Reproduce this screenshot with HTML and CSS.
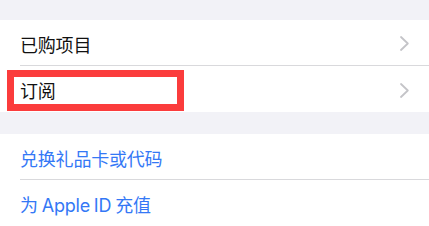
FILE: index.html
```html
<!DOCTYPE html>
<html lang="zh-CN">

<head>
    <meta charset="UTF-8">
    <meta name="viewport" content="width=device-width, initial-scale=1.0">
    <title>账户</title>
    <link rel="stylesheet" href="styles.css">
</head>

<body>

    <div class="gap top"></div>

    <div class="group">
        <div class="row">
            <div class="cell">
                <span class="label">已购项目</span>
                <svg class="chevron" width="9" height="15" viewBox="0 0 9 15">
                    <path d="M1 1 L7.8 7.5 L1 14" fill="none" stroke="#c4c4c8" stroke-width="1.8" stroke-linecap="round" stroke-linejoin="round"/>
                </svg>
            </div>
        </div>
        <div class="row">
            <div class="cell">
                <span class="label">订阅</span>
                <svg class="chevron" width="9" height="15" viewBox="0 0 9 15">
                    <path d="M1 1 L7.8 7.5 L1 14" fill="none" stroke="#c4c4c8" stroke-width="1.8" stroke-linecap="round" stroke-linejoin="round"/>
                </svg>
            </div>
            <!-- highlight box drawn over the row -->
            <div class="highlight"></div>
        </div>
    </div>

    <div class="gap"></div>

    <div class="group">
        <div class="row">
            <div class="cell">
                <span class="label link">兑换礼品卡或代码</span>
            </div>
        </div>
        <div class="row">
            <div class="cell">
                <span class="label link">为 Apple ID 充值</span>
            </div>
        </div>
    </div>

</body>

</html>
```

FILE: styles.css
```css
* {
    margin: 0;
    padding: 0;
    box-sizing: border-box;
}

body {
    font-family: Inter, "Noto Sans CJK SC", sans-serif;
    background-color: #f2f2f7;
    width: 429px;
    height: 226px;
    overflow: hidden;
}

.gap {
    height: 22px;
}

.gap.top {
    height: 20px;
}

.group {
    background-color: #fff;
}

.row {
    position: relative;
    padding-left: 20px;
}

.cell {
    height: 46px;
    display: flex;
    align-items: center;
    justify-content: space-between;
    padding-right: 20px;
    padding-top: 2px;
    border-bottom: 1px solid #d9d9dc;
}

.row:last-child .cell {
    border-bottom: none;
}

.label {
    font-size: 18px;
    color: #111;
    letter-spacing: -0.2px;
    word-spacing: -1px;
}

.label.link {
    color: #3478f6;
}

.chevron {
    display: block;
}

.highlight {
    position: absolute;
    left: 7px;
    top: 4px;
    width: 177px;
    height: 41px;
    border: 7px solid #fb3c3c;
}
```
